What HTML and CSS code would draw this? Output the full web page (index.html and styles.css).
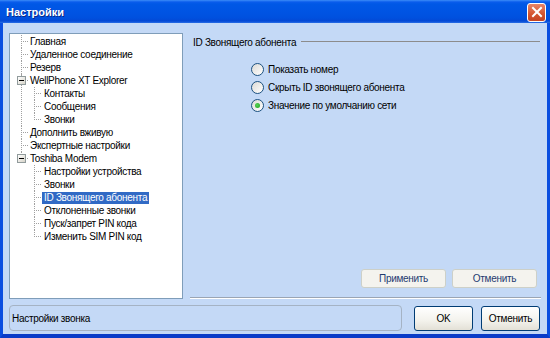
FILE: index.html
```html
<!DOCTYPE html>
<html lang="ru">
<head>
    <meta charset="UTF-8">
    <title>Настройки</title>
    <link rel="stylesheet" href="styles.css">
</head>
<body>

    <div class="window">
        <div class="titlebar">
            <span class="title">Настройки</span>
            <span class="close-btn">
                <svg width="12" height="12" viewBox="0 0 12 12">
                    <path d="M2 2 L10 10 M10 2 L2 10" stroke="#ffffff" stroke-width="2" stroke-linecap="square"/>
                </svg>
            </span>
        </div>

        <div class="client">
            <div class="main">
                <div class="tree">
                    <ul class="tree-root">
                        <li><span class="label">Главная</span></li>
                        <li><span class="label">Удаленное соединение</span></li>
                        <li><span class="label">Резерв</span></li>
                        <li class="branch">
                            <span class="toggle"></span><span class="label">WellPhone XT Explorer</span>
                            <ul class="tree-sub">
                                <li><span class="label">Контакты</span></li>
                                <li><span class="label">Сообщения</span></li>
                                <li><span class="label">Звонки</span></li>
                            </ul>
                        </li>
                        <li><span class="label">Дополнить вживую</span></li>
                        <li><span class="label">Экспертные настройки</span></li>
                        <li class="branch">
                            <span class="toggle"></span><span class="label">Toshiba Modem</span>
                            <ul class="tree-sub">
                                <li><span class="label">Настройки устройства</span></li>
                                <li><span class="label">Звонки</span></li>
                                <li><span class="label selected">ID Звонящего абонента</span></li>
                                <li><span class="label">Отклоненные звонки</span></li>
                                <li><span class="label">Пуск/запрет PIN кода</span></li>
                                <li><span class="label">Изменить SIM PIN код</span></li>
                            </ul>
                        </li>
                    </ul>
                </div>

                <div class="panel">
                    <div class="group-title">
                        <span>ID Звонящего абонента</span>
                        <span class="rule"></span>
                    </div>

                    <div class="options">
                        <label class="radio"><span class="radio-dot"></span>Показать номер</label>
                        <label class="radio"><span class="radio-dot"></span>Скрыть ID звонящего абонента</label>
                        <label class="radio"><span class="radio-dot checked"></span>Значение по умолчанию сети</label>
                    </div>

                    <div class="panel-buttons">
                        <button class="btn btn-flat">Применить</button>
                        <button class="btn btn-flat">Отменить</button>
                    </div>
                    <div class="separator"></div>
                </div>
            </div>

            <div class="footer">
                <div class="status">Настройки звонка</div>
                <button class="btn btn-main">OK</button>
                <button class="btn btn-main">Отменить</button>
            </div>
        </div>
    </div>

</body>
</html>
```

FILE: styles.css
```css
body, html {
    margin: 0;
    padding: 0;
    font-family: 'Liberation Sans', Arial, sans-serif;
    font-size: 10px;
    letter-spacing: -0.3px;
    color: #000000;
}

.window {
    width: 550px;
    height: 338px;
    display: flex;
    flex-direction: column;
    background: #0a3fd2;
}

.titlebar {
    height: 23px;
    display: flex;
    align-items: center;
    justify-content: space-between;
    padding: 0 4px 0 6px;
    box-sizing: border-box;
    background: linear-gradient(to bottom, #3c8cf7 0px, #0a5cec 2px, #0058e6 4px, #0054e3 12px, #0050de 18px, #0448d4 21px, #2a6fe6 23px);
}

.title {
    color: #ffffff;
    font-weight: bold;
    font-size: 11px;
    letter-spacing: 0;
    text-shadow: 1px 1px 0 #0a2a8a;
}

.close-btn {
    width: 17px;
    height: 17px;
    border: 1px solid #ffffff;
    border-radius: 3px;
    background: linear-gradient(to bottom, #e8866a, #d4542e 60%, #c44422);
    display: flex;
    align-items: center;
    justify-content: center;
    margin-top: 1px;
}

.client {
    flex: 1;
    display: flex;
    flex-direction: column;
    background-color: #c4d9f6;
    border-left: 3px solid #0a4ee0;
    border-right: 3px solid #0a4ee0;
    border-bottom: 4px solid #0a3cc8;
    padding: 10px 6px 3px 6px;
}

.main {
    height: 266px;
    display: flex;
    gap: 7px;
}

/* дерево */

.tree {
    width: 174px;
    box-sizing: border-box;
    background: #ffffff;
    border: 1px solid #7f9db9;
    padding-top: 1px;
}

.tree ul {
    list-style: none;
    margin: 0;
    padding: 0;
}

.tree li {
    position: relative;
    line-height: 13px;
    white-space: nowrap;
}

.tree-root > li {
    padding-left: 18px;
}

.tree-sub > li {
    padding-left: 14px;
}

.tree li::before {
    content: "";
    position: absolute;
    top: 0;
    bottom: 0;
    border-left: 1px dotted #a0a0a0;
}

.tree li:last-child::before {
    bottom: auto;
    height: 7px;
}

.tree li::after {
    content: "";
    position: absolute;
    top: 6px;
    width: 7px;
    border-top: 1px dotted #a0a0a0;
}

.tree-root > li::before,
.tree-root > li::after {
    left: 11px;
}

.tree-sub > li::before,
.tree-sub > li::after {
    left: 6px;
}

.label {
    display: inline-block;
    padding: 0 2px;
    height: 12px;
    line-height: 12px;
    vertical-align: top;
    margin-top: 1px;
}

.label.selected {
    background: #316ac5;
    color: #ffffff;
}

.toggle {
    position: absolute;
    left: 7px;
    top: 2px;
    width: 7px;
    height: 7px;
    border: 1px solid #919b9c;
    background: linear-gradient(to bottom right, #ffffff, #d6d3c8);
    z-index: 1;
}

.toggle::after {
    content: "";
    position: absolute;
    left: 1px;
    top: 3px;
    width: 5px;
    border-top: 1px solid #000000;
}

/* правая панель */

.panel {
    flex: 1;
    display: flex;
    flex-direction: column;
}

.group-title {
    display: flex;
    align-items: center;
    margin-top: 3px;
    height: 13px;
    padding-left: 3px;
    padding-right: 1px;
}

.rule {
    flex: 1;
    margin-left: 5px;
    border-top: 1px solid #8c8c8c;
    margin-top: -2px;
}

.options {
    margin-top: 11px;
    padding-left: 61px;
    display: flex;
    flex-direction: column;
}

.radio {
    height: 18px;
    display: flex;
    align-items: center;
}

.radio-dot {
    width: 11px;
    height: 11px;
    border: 1px solid #1c5180;
    border-radius: 50%;
    background: linear-gradient(to bottom right, #dcdad5, #ffffff);
    margin-right: 4px;
    position: relative;
}

.radio-dot.checked::after {
    content: "";
    position: absolute;
    left: 3px;
    top: 3px;
    width: 5px;
    height: 5px;
    border-radius: 50%;
    background: radial-gradient(circle at 40% 40%, #55d255, #21a121);
}

.panel-buttons {
    margin-top: auto;
    display: flex;
    justify-content: flex-end;
    gap: 6px;
    padding-right: 4px;
}

.btn {
    font-family: 'Liberation Sans', Arial, sans-serif;
    font-size: 10px;
    letter-spacing: -0.3px;
    padding: 0;
    border-radius: 3px;
}

.btn-flat {
    width: 85px;
    height: 19px;
    border: 1px solid #cdd0c8;
    background: #f4f3ee;
    color: #1f3b70;
}

.separator {
    margin-top: 9px;
    border-top: 1px solid #9aa5b4;
    border-bottom: 1px solid #ffffff;
}

/* нижняя строка */

.footer {
    margin-top: 6px;
    height: 26px;
    display: flex;
    align-items: center;
    gap: 8px;
}

.status {
    width: 393px;
    height: 26px;
    box-sizing: border-box;
    border: 1px solid #a5b3c4;
    border-radius: 4px;
    padding-left: 2px;
    display: flex;
    align-items: center;
    margin-right: 4px;
}

.btn-main {
    width: 59px;
    height: 25px;
    border: 1px solid #003c74;
    background: linear-gradient(to bottom, #ffffff, #f3f2ec 60%, #e3e0d6);
    color: #000000;
}
```
